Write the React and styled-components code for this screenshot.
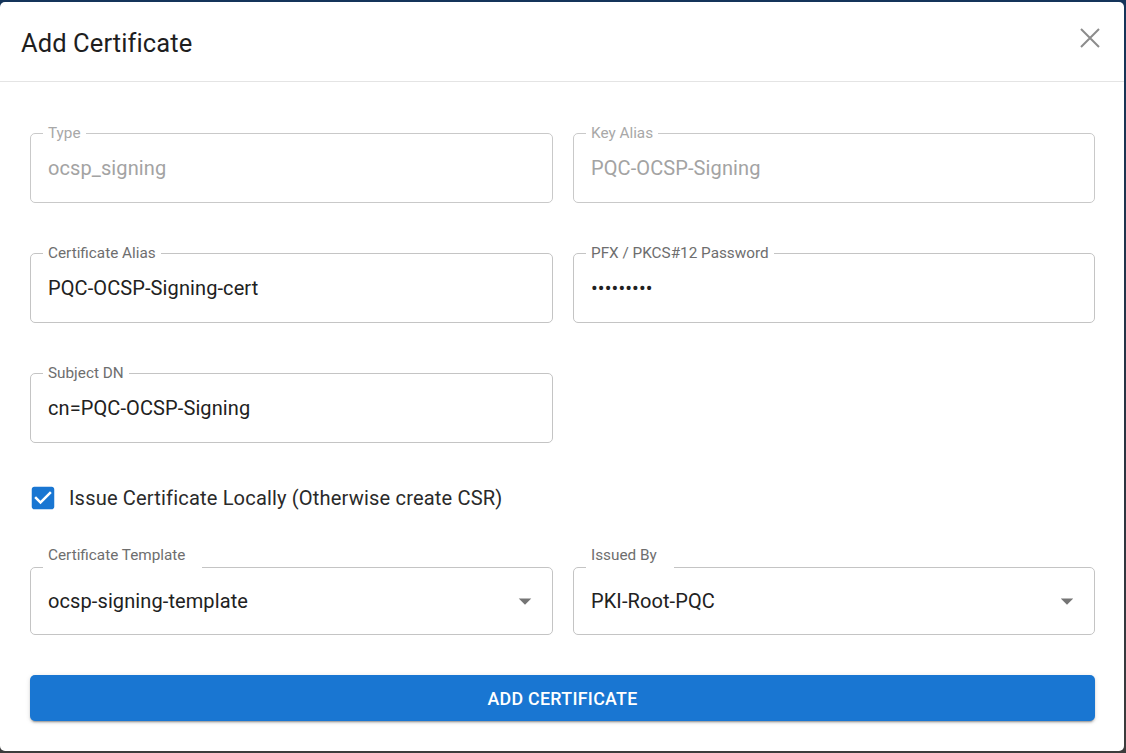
import styled, { createGlobalStyle } from "styled-components";

const GlobalStyle = createGlobalStyle`
  html, body {
    margin: 0;
    padding: 0;
    background: linear-gradient(180deg, #14345a 0%, #2a3340 60%, #3c3c3c 100%);
    font-family: Roboto, "Noto Sans", "Liberation Sans", sans-serif;
  }
  * { box-sizing: border-box; }
`;

const fields = [
  { label: "Type", value: "ocsp_signing", disabled: true },
  { label: "Key Alias", value: "PQC-OCSP-Signing", disabled: true },
  { label: "Certificate Alias", value: "PQC-OCSP-Signing-cert" },
  { label: "PFX / PKCS#12 Password", value: "mysecret1", password: true },
  { label: "Subject DN", value: "cn=PQC-OCSP-Signing" },
];

const selects = [
  { label: "Certificate Template", value: "ocsp-signing-template" },
  { label: "Issued By", value: "PKI-Root-PQC" },
];

export default function App() {
  return (
    <>
      <GlobalStyle />
      <Styled.Dialog>
        <Styled.Header>
          <Styled.Title>Add Certificate</Styled.Title>
          <Styled.Close aria-label="close">
            <svg width="22" height="22" viewBox="0 0 22 22">
              <path d="M2 2L20 20M20 2L2 20" stroke="#8c8c8c" strokeWidth="2" fill="none" />
            </svg>
          </Styled.Close>
        </Styled.Header>

        <Styled.Content>
          <Styled.Grid>
            {fields.map((f) => (
              <Styled.Field key={f.label} $disabled={f.disabled}>
                <Styled.Label $disabled={f.disabled}>{f.label}</Styled.Label>
                <Styled.Input
                  readOnly
                  type={f.password ? "password" : "text"}
                  value={f.value}
                  $disabled={f.disabled}
                />
              </Styled.Field>
            ))}
          </Styled.Grid>

          <Styled.CheckRow>
            <svg width="30" height="30" viewBox="0 0 24 24">
              <path
                fill="#1976d2"
                d="M19 3H5c-1.11 0-2 .9-2 2v14c0 1.1.89 2 2 2h14c1.11 0 2-.9 2-2V5c0-1.1-.89-2-2-2zm-9 14l-5-5 1.41-1.41L10 14.17l7.59-7.59L19 8l-9 9z"
              />
            </svg>
            <Styled.CheckText>Issue Certificate Locally (Otherwise create CSR)</Styled.CheckText>
          </Styled.CheckRow>

          <Styled.SelectGrid>
            {selects.map((s) => (
              <Styled.Field key={s.label} $select>
                <Styled.Label $raised>{s.label}</Styled.Label>
                <Styled.SelectValue>{s.value}</Styled.SelectValue>
                <svg width="30" height="30" viewBox="0 0 24 24">
                  <path fill="#757575" d="M7 10l5 5 5-5z" />
                </svg>
              </Styled.Field>
            ))}
          </Styled.SelectGrid>

          <Styled.Button>Add Certificate</Styled.Button>
        </Styled.Content>
      </Styled.Dialog>
    </>
  );
}

const Styled = {
  Dialog: styled.div`
    margin: 2px 2px 2px 0;
    width: 1124px;
    height: 749px;
    background: #ffffff;
    border-radius: 5px;
    overflow: hidden;
    display: flex;
    flex-direction: column;
  `,

  Header: styled.div`
    height: 80px;
    flex-shrink: 0;
    display: flex;
    align-items: center;
    justify-content: space-between;
    padding: 2px 25px 0 21px;
    border-bottom: 1px solid #e4e4e4;
  `,

  Title: styled.h2`
    margin: 0;
    font-size: 25.5px;
    font-weight: 400;
    color: #1e1e1e;
    letter-spacing: 0.1px;
  `,

  Close: styled.button`
    border: none;
    background: none;
    padding: 0;
    width: 22px;
    height: 22px;
    margin-top: -10px;
    margin-right: -2px;
    cursor: pointer;
    display: flex;
  `,

  Content: styled.div`
    padding: 51px 29px 0 30px;
    display: flex;
    flex-direction: column;
  `,

  Grid: styled.div`
    display: grid;
    grid-template-columns: 523px 522px;
    column-gap: 20px;
    row-gap: 50px;
  `,

  SelectGrid: styled.div`
    display: grid;
    grid-template-columns: 523px 522px;
    column-gap: 20px;
    margin-top: 54px;
  `,

  Field: styled.div`
    position: relative;
    height: ${({ $select }) => ($select ? "68px" : "70px")};
    border: 1px solid ${({ $disabled }) => ($disabled ? "#c9c9c9" : "#c4c4c4")};
    border-radius: 5px;
    display: flex;
    align-items: center;
    padding: 0 12px 0 17px;

    svg {
      flex-shrink: 0;
    }
  `,

  Label: styled.span`
    position: absolute;
    left: 12px;
    top: ${({ $raised }) => ($raised ? "-22px" : "-10px")};
    padding: 0 5px;
    background: ${({ $raised }) => ($raised ? "transparent" : "#ffffff")};
    font-size: 15.3px;
    line-height: 18px;
    color: ${({ $disabled }) => ($disabled ? "#a8a8a8" : "#6e6e6e")};
    white-space: nowrap;

    &::after {
      content: "";
      display: ${({ $raised }) => ($raised ? "block" : "none")};
      position: absolute;
      left: 0;
      right: -12px;
      top: 20px;
      height: 4px;
      background: #ffffff;
    }
  `,

  Input: styled.input`
    flex: 1;
    min-width: 0;
    border: none;
    outline: none;
    background: transparent;
    padding: 0;
    font-family: Roboto, "Noto Sans", sans-serif;
    font-size: 20px;
    color: ${({ $disabled }) => ($disabled ? "#a3a3a3" : "#212121")};
    letter-spacing: 0.1px;
  `,

  SelectValue: styled.div`
    flex: 1;
    font-size: 20px;
    color: #212121;
    letter-spacing: 0.1px;
  `,

  CheckRow: styled.label`
    display: flex;
    align-items: center;
    gap: 11px;
    margin: 40px 0 0 -2px;
    height: 30px;
  `,

  CheckText: styled.span`
    font-size: 20.1px;
    color: #2a2a2a;
    letter-spacing: 0.15px;
  `,

  Button: styled.button`
    margin-top: 40px;
    height: 46px;
    width: 100%;
    border: none;
    border-radius: 5px;
    background: #1976d2;
    color: #ffffff;
    font-family: Roboto, "Noto Sans", sans-serif;
    font-size: 17.8px;
    font-weight: 500;
    text-transform: uppercase;
    letter-spacing: 0.3px;
    box-shadow: 0 3px 1px -2px rgba(0, 0, 0, 0.2), 0 2px 2px 0 rgba(0, 0, 0, 0.14),
      0 1px 5px 0 rgba(0, 0, 0, 0.12);
    cursor: pointer;
  `,
};
